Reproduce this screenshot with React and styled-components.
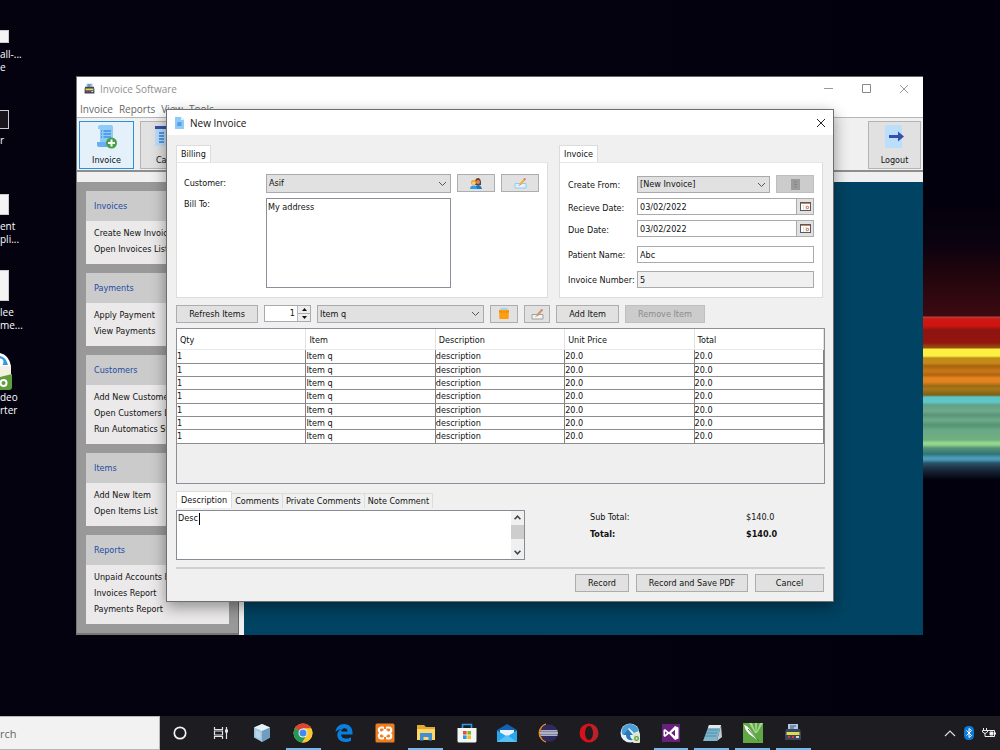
import React from "react";
import styled, { createGlobalStyle, css } from "styled-components";

const uiFont = `"DejaVu Sans Condensed", "DejaVu Sans", sans-serif`;
const systemFont = `"Open Sans", "Noto Sans", sans-serif`;

const GlobalStyle = createGlobalStyle`
  *, *::before, *::after {
    box-sizing: border-box;
  }

  body {
    margin: 0;
    background-color: #02000c;
    font-family: ${uiFont};
    font-size: 9px;
    line-height: 13px;
    color: #111;
  }

  button, input, select, textarea {
    margin: 0;
    padding: 0;
    font: inherit;
    color: inherit;
    border-radius: 0;
    outline: none;
  }

  svg {
    display: block;
  }
`;

/* ---------- desktop ---------- */

const Screen = styled.div`
  display: flex;
  flex-direction: column;
  min-height: 100vh;
`;

const Desktop = styled.main`
  position: relative;
  flex: 1;
  overflow: hidden;
  min-height: 650px;
  background:
    linear-gradient(
      to bottom,
      transparent 200px,
      #0c0210 245px,
      #22050c 275px,
      #3c0a12 316px,
      #b8423c 317px,
      #d21712 319px,
      #cc1511 326px,
      #8c1410 330px,
      #96140f 343px,
      #8a3a0c 345px,
      #a04c10 348px,
      #fcf040 349px,
      #fcf040 356px,
      #bd8c18 358px,
      #c88a18 363px,
      #a8620f 366px,
      #c87818 371px,
      #b0640f 375px,
      #e8841c 378px,
      #e08220 382px,
      #9a6a14 386px,
      #a87818 389px,
      #7c6018 395px,
      #5cc4c8 397px,
      #60c8c8 402px,
      #62a088 405px,
      #70aa8c 411px,
      #589478 415px,
      #6caa88 420px,
      #549474 425px,
      #68a884 430px,
      #72b080 440px,
      #94dc90 443px,
      #8cd088 445px,
      #569278 448px,
      #2f7474 454px,
      #4ca0bc 458px,
      #4896b4 460px,
      #2a5468 463px,
      #1c2c40 469px,
      #02000c 480px
    );
  background-repeat: no-repeat;

  &::before {
    content: "";
    position: absolute;
    inset: 0;
    background: linear-gradient(to right, #04020f 50%, transparent 92%);
  }
`;

const Shortcut = styled.div`
  position: absolute;
  left: 0;
  top: ${(props) => props.$top}px;
  font-family: ${systemFont};
  font-size: 10px;
  line-height: 13px;
  color: #fff;
  white-space: pre;
`;

const Thumbnail = styled.div`
  width: 9px;
  height: ${(props) => props.$height}px;
  margin-bottom: 5px;
  border: 1px solid #ccc;
  border-left: 0;
  background-color: ${(props) => (props.$dark ? "#1a141c" : "#f4f4f4")};
`;

/* ---------- windows ---------- */

const Window = styled.section`
  position: absolute;
  display: flex;
  flex-direction: column;
  background-color: #f0f0f0;
`;

const MainWindow = styled(Window)`
  top: 76px;
  left: 76px;
  right: 77px;
  border-top: 1px solid #666;
  border-left: 1px solid #777;
`;

const DialogWindow = styled(Window)`
  top: 109px;
  left: 166px;
  right: 166px;
  border: 1px solid #6e6e6e;
  box-shadow: 0 5px 14px rgba(0, 0, 0, 0.4);
`;

const TitleBar = styled.header`
  display: flex;
  align-items: center;
  height: ${(props) => (props.$dialog ? 25 : 23)}px;
  padding-left: 7px;
  background-color: #fff;
  color: ${(props) => (props.$dialog ? "#111" : "#8f8f8f")};
`;

const WindowTitle = styled.h1`
  flex: 1;
  margin: 0 0 0 5px;
  font-family: ${systemFont};
  font-size: 10px;
  font-weight: 400;
  line-height: 14px;
`;

const CaptionButton = styled.button`
  display: flex;
  align-items: center;
  justify-content: center;
  width: ${(props) => (props.$narrow ? 24 : 38)}px;
  height: 22px;
  border: 0;
  background: none;
`;

const MenuBar = styled.nav`
  display: flex;
  gap: 6px;
  height: 18px;
  padding: 2px 3px 0;
  background-color: #fff;
  border-bottom: 1px solid #b5b5b5;
`;

const MenuLink = styled.a`
  font-family: ${systemFont};
  font-size: 10px;
  line-height: 14px;
  color: #666;
  text-decoration: none;
`;

const ToolBar = styled.div`
  display: flex;
  gap: 6px;
  margin-bottom: 10px;
  padding: 3px 2px 1px;
  border-bottom: 2px solid #8e8e8e;
`;

const ToolButton = styled.button`
  display: flex;
  flex-direction: column;
  align-items: center;
  justify-content: space-between;
  width: ${(props) => (props.$last ? 53 : 55)}px;
  height: 48px;
  padding: 3px 0 1px;
  border: 1px solid #b4b4b4;
  background-color: #e1e1e1;
  margin-left: ${(props) => (props.$last ? "auto" : 0)};

  ${(props) =>
    props.$active &&
    css`
      border-color: #2a8fdc;
      background-color: #e4f1fb;
    `}
`;

const Workspace = styled.div`
  display: flex;
  background-color: #004362;
`;

const SideBar = styled.aside`
  display: flex;
  flex-direction: column;
  gap: 9px;
  width: 162px;
  padding: 9px;
  background-color: #999;
  border-right: 1px solid #666;
  border-bottom: 2px solid #777;
`;

const Splitter = styled.div`
  width: 5px;
  background-color: #f0f0f0;
`;

const Card = styled.section`
  background-color: #ebe9ea;
`;

const CardTitle = styled.h2`
  margin: 0;
  padding: 1px 8px;
  font-size: 9px;
  font-weight: 400;
  line-height: 28px;
  color: #1f4ba5;
  background-color: #cbcbcb;
`;

const CardList = styled.ul`
  margin: 0;
  padding: 4px 8px 7px;
  list-style: none;
`;

const CardLink = styled.a`
  display: block;
  line-height: 16px;
  white-space: nowrap;
  color: #111;
  text-decoration: none;
`;

/* ---------- dialog ---------- */

const DialogBody = styled.form`
  display: flex;
  flex-direction: column;
  padding: 10px 8px 9px 9px;
`;

const Panels = styled.div`
  display: grid;
  grid-template-columns: 372fr 264fr;
  gap: 11px;
  padding-right: 2px;
`;

const PanelColumn = styled.div`
  display: flex;
  flex-direction: column;
  align-items: stretch;
`;

const TabRow = styled.div`
  display: flex;
  align-items: flex-end;
`;

const Tab = styled.button`
  height: ${(props) => (props.$active ? 17 : 15)}px;
  padding: 0 4px;
  border: 1px solid #dcdcdc;
  border-bottom: 0;
  background-color: ${(props) => (props.$active ? "#fff" : "#f0f0f0")};

  & + & {
    border-left: 0;
    padding: 0 3px;
  }
`;

const Panel = styled.div`
  flex: 1;
  display: grid;
  border: 1px solid #dcdcdc;
  border-top-color: #e6e6e6;
  background-color: #fff;
`;

const BillingPanel = styled(Panel)`
  grid-template-columns: 76px 1fr 38px 38px;
  grid-template-rows: 19px 90px;
  gap: 5px 6px;
  padding: 11px 8px 9px 7px;
`;

const InvoicePanel = styled(Panel)`
  align-content: start;
  padding: 12px 8px 9px 8px;
`;

const FieldRow = styled.div`
  display: flex;
  align-items: flex-end;
  height: ${(props) => props.$height}px;
`;

const Label = styled.label`
  flex: none;
  width: 69px;
  line-height: ${(props) => (props.$low ? 13 : 16)}px;
  white-space: nowrap;
`;

const BillingLabel = styled.label`
  line-height: ${(props) => (props.$top ? 13 : 19)}px;
`;

const field = css`
  border: 1px solid #a9a9ae;
  background-color: #fff;
`;

const TextInput = styled.input`
  ${field}
  flex: 1;
  min-width: 0;
  width: 100%;
  height: 17px;
  padding: 0 2px;

  &:read-only {
    background-color: #f0f0f0;
  }
`;

const TextArea = styled.textarea`
  ${field}
  display: block;
  width: 100%;
  padding: 2px 1px;
  border-color: #8d8f98;
  resize: none;
  overflow: hidden;
`;

const SelectBox = styled.div`
  position: relative;
  flex: ${(props) => props.$flex || "1"};
  height: ${(props) => props.$height || 18}px;
  margin-right: ${(props) => props.$gap || 0}px;

  svg {
    position: absolute;
    right: 4px;
    top: 50%;
    margin-top: -3px;
    pointer-events: none;
  }
`;

const Select = styled.select`
  ${field}
  appearance: none;
  display: block;
  width: 100%;
  height: 100%;
  padding: 0 16px 0 2px;
  background-color: #e1e1e1;
`;

const Button = styled.button`
  display: flex;
  align-items: center;
  justify-content: center;
  flex: none;
  width: ${(props) => props.$width}px;
  height: 18px;
  border: 1px solid #adadad;
  background-color: #e1e1e1;
  white-space: nowrap;

  &:disabled {
    border-color: #bfbfbf;
    background-color: #ccc;
    color: #8b8b8b;
  }
`;

const DateButton = styled(Button)`
  height: 17px;
  border-left: 0;
`;

const ItemBar = styled.div`
  display: flex;
  gap: 6px;
  margin: 7px 0 5px;
`;

const Spinner = styled.div`
  ${field}
  display: flex;
  width: 47px;
  height: 17px;
`;

const SpinnerInput = styled.input`
  flex: 1;
  width: 0;
  padding-right: 2px;
  border: 0;
  text-align: right;
`;

const SpinnerArrows = styled.div`
  display: flex;
  flex-direction: column;
  width: 13px;
  border-left: 1px solid #bbb;
`;

const ArrowButton = styled.button`
  display: flex;
  align-items: center;
  justify-content: center;
  flex: 1;
  border: 0;
  background-color: #eee;

  & + & {
    border-top: 1px solid #aaa;
  }
`;

const TableFrame = styled.div`
  min-height: 156px;
  border: 1px solid #8d8f98;
  background-color: #efefef;
`;

const Table = styled.table`
  width: 100%;
  table-layout: fixed;
  border-collapse: separate;
  border-spacing: 0;
`;

const HeadCell = styled.th`
  height: 21px;
  padding: 2px 3px 0;
  border-right: 1px solid #e2e2e2;
  border-bottom: 1px solid #e9e9e9;
  background-color: #fff;
  font-weight: 400;
  text-align: left;
`;

const Cell = styled.td`
  height: 13px;
  padding: 0;
  border-right: 1px solid #828282;
  border-bottom: 1px solid #8c8c8c;
  background-color: #fff;
  line-height: 12px;
  vertical-align: top;
`;

const ItemRow = styled.tr`
  &:nth-child(3n + 1) ${Cell} {
    height: 14px;
  }
`;

const Summary = styled.div`
  display: flex;
  margin-top: 7px;
`;

const Notes = styled.div`
  flex: none;
  width: 349px;
`;

const NotesPanel = styled.div`
  position: relative;
  display: flex;
  height: 50px;
  margin-top: 2px;
  border: 1px solid #868b94;
  background-color: #fff;
`;

const NotesArea = styled(TextArea)`
  flex: 1;
  height: 48px;
  padding: 1px;
  border: 0;
`;

const Caret = styled.span`
  position: absolute;
  left: 22px;
  top: 2px;
  width: 1px;
  height: 12px;
  background-color: #000;
`;

const ScrollBar = styled.div`
  display: flex;
  flex-direction: column;
  align-items: center;
  justify-content: space-between;
  width: 13px;
  padding: 4px 0;
  background-color: #f0f0f0;
`;

const ScrollThumb = styled.div`
  width: 100%;
  height: 14px;
  margin-bottom: 6px;
  background-color: #cdcdcd;
`;

const Totals = styled.dl`
  display: grid;
  grid-template-columns: 156px auto;
  align-content: start;
  row-gap: 4px;
  margin: 20px 0 0 65px;
`;

const TotalLabel = styled.dt`
  font-weight: ${(props) => (props.$bold ? 700 : 400)};
`;

const TotalValue = styled.dd`
  margin: 0;
  font-weight: ${(props) => (props.$bold ? 700 : 400)};
`;

const Footer = styled.footer`
  display: flex;
  justify-content: flex-end;
  gap: 7px;
  margin-top: 7px;
  padding: 5px 1px 0 0;
  border-top: 2px solid #d0d0d0;
`;

/* ---------- taskbar ---------- */

const TaskBar = styled.footer`
  position: relative;
  display: flex;
  height: 34px;
  background-color: #1c1c21;
`;

const SearchInput = styled.input`
  width: 160px;
  height: 34px;
  border: 1px solid #b8b8b8;
  border-left: 0;
  background-color: #f2f2f2;
  font-family: ${systemFont};
  font-size: 11px;

  &::placeholder {
    color: #666;
    opacity: 1;
  }
`;

const TaskList = styled.div`
  display: grid;
  grid-template-columns: repeat(16, 1fr);
  flex: 0 1 654px;
`;

const TaskButton = styled.button`
  display: flex;
  align-items: center;
  justify-content: center;
  margin: 0 3px;
  border: 0;
  border-top: 2px solid transparent;
  border-bottom: 2px solid ${(props) => (props.$running ? "#76b9ed" : "transparent")};
  background: none;
`;

const Tray = styled.div`
  display: flex;
  align-items: center;
  gap: 8px;
  margin-left: auto;
  padding-right: 4px;
`;

/* ---------- icons ---------- */

const Chevron = () => (
  <svg width="9" height="6" viewBox="0 0 9 6" fill="none" stroke="#555">
    <path d="M1 1l3.5 3.5L8 1" />
  </svg>
);

const Cross = ({ color = "#222" }) => (
  <svg width="10" height="10" viewBox="0 0 10 10" fill="none" stroke={color}>
    <path d="M1 1l8 8M9 1L1 9" />
  </svg>
);

const Triangle = ({ down }) => (
  <svg width="5" height="3" viewBox="0 0 5 3" fill="#111">
    <path d={down ? "M0 0h5L2.5 3z" : "M0 3h5L2.5 0z"} />
  </svg>
);

const ScrollArrow = ({ down }) => (
  <svg width="7" height="5" viewBox="0 0 7 5" fill="none" stroke="#444" strokeWidth="1.6">
    <path d={down ? "M.6 .8l2.9 3 2.9-3" : "M.6 4.2l2.9-3 2.9 3"} />
  </svg>
);

const RegisterIcon = ({ size = 11 }) => (
  <svg width={size} height={size} viewBox="0 0 18 18">
    <path d="M4 1h10v7H4z" fill="#a9cbe6" />
    <path d="M6 3h6M6 5h4" stroke="#456" />
    <path d="M2 6h14l1 4v7H1v-7z" fill="#3a4560" />
    <path d="M2.500 9h13v3h-13z" fill="#e0d94a" />
    <path d="M4 14h2M8 14h2" stroke="#d43c3c" strokeWidth="2" />
    <path d="M12 14h3" stroke="#cdd6e0" strokeWidth="2" />
  </svg>
);

const DocIcon = () => (
  <svg width="11" height="12" viewBox="0 0 11 12">
    <path d="M1 0h6l3 3v9H1z" fill="#90caf9" />
    <path d="M7 0l3 3H7z" fill="#dff0ff" />
    <path d="M3.500 6h4M3 8h4.500" stroke="#1976d2" />
  </svg>
);

const InvoiceIcon = () => (
  <svg width="22" height="24" viewBox="0 0 22 24">
    <path d="M2 2q0-2 2-2h11q2 0 2 2v17H4V4H2z" fill="#90caf9" />
    <path d="M1 17h12v3q0 2-2 2H3q-2 0-2-2z" fill="#64b0f0" />
    <path d="M5 6h1M7.500 6H15M5 9h1M7.500 9H15M5 12h1M7.500 12H15" stroke="#1976d2" strokeWidth="1.200" />
    <circle cx="15.500" cy="18" r="5.500" fill="#43a047" />
    <path d="M15.500 14.500v7M12 18h7" stroke="#fff" strokeWidth="2" />
  </svg>
);

const CardsIcon = () => (
  <svg width="26" height="22" viewBox="0 0 26 22">
    <path d="M0 1h26v20H0z" fill="#bbdefb" />
    <path d="M0 1h26v3H0z" fill="#3550a8" />
    <path d="M4 8h5M4 11h5M4 14h5M4 17h5M11 8h5M11 11h5M11 14h5M11 17h5" stroke="#2f86dc" strokeWidth="1.600" />
  </svg>
);

const LogoutIcon = () => (
  <svg width="20" height="24" viewBox="0 0 20 24">
    <rect x="0" y="0" width="17" height="23" rx="1.500" fill="#bbdefb" />
    <path d="M4 10h9V6.500l6 5-6 5V13H4z" fill="#3550a8" />
  </svg>
);

const PeopleIcon = () => (
  <svg width="12" height="11" viewBox="0 0 12 11">
    <path d="M5 3.500Q5.500 0 8 0t3 4v3H5z" fill="#6d4030" />
    <circle cx="8" cy="4" r="2" fill="#d98850" />
    <path d="M5 11q0-4 3-4t4 4z" fill="#1976d2" />
    <circle cx="3.500" cy="4.500" r="2.500" fill="#f6a623" />
    <circle cx="3.700" cy="5.200" r="1.600" fill="#ffcc80" />
    <path d="M0 11q0-3.500 3.500-3.500T7 11z" fill="#29a3e8" />
  </svg>
);

const EditIcon = ({ muted }) => (
  <svg width="13" height="11" viewBox="0 0 13 11" fill="none">
    <path d="M1 5.500h11v4.500H1z" fill={muted ? "#f4f4f4" : "#e3f3fd"} stroke={muted ? "#a0a0a0" : "#8ccdf2"} />
    <path d="M6 6.500L10 2" stroke={muted ? "#d09a60" : "#fbb03b"} strokeWidth="2" />
    <path d="M10 2l1.400-1.500" stroke="#e57373" strokeWidth="2" />
    <path d="M5 7.500l1-1" stroke="#555" />
  </svg>
);

const BoxIcon = () => (
  <svg width="12" height="12" viewBox="0 0 12 12">
    <path d="M2.500 0h7v3h-7z" fill="#9fd4ee" />
    <path d="M1 2h10l-.5 9h-9z" fill="#ff9d0a" />
    <path d="M1 2l2 1.500h6L11 2v2.500H1z" fill="#e68a20" />
  </svg>
);

const FormIcon = () => (
  <svg width="9" height="11" viewBox="0 0 9 11">
    <path d="M0 0h9v11H0z" fill="#9b9b9b" />
    <path d="M3 3h3M3 5.500h3M3 8h3" stroke="#858585" />
  </svg>
);

const CalendarIcon = () => (
  <svg width="11" height="9" viewBox="0 0 11 9">
    <rect x=".5" y=".5" width="10" height="8" fill="#fff" stroke="#555a66" />
    <path d="M1 1.500h9" stroke="#c98650" />
    <path d="M3.500 3v5M6 3v5" stroke="#ddd" />
    <circle cx="7.500" cy="5.500" r="1.200" fill="none" stroke="#d4582a" />
  </svg>
);

const ConverterIcon = () => (
  <svg width="12" height="38" viewBox="0 0 12 38">
    <path d="M0 0Q9 2 11 13H0z" fill="#fff" />
    <path d="M0 3Q6 4 8 12H0z" fill="#2f9ade" />
    <circle cx="0" cy="9" r="3.500" fill="#fff" />
    <path d="M0 13h11v12H0z" fill="#f3f1e2" />
    <path d="M0 24l12-3v13q0 3-3 3H0z" fill="#5f9e3c" />
    <circle cx="3.500" cy="30" r="3" fill="none" stroke="#fff" strokeWidth="2" />
  </svg>
);

const TaskIcon = ({ children }) => (
  <svg width="20" height="20" viewBox="0 0 20 20" fill="none">
    {children}
  </svg>
);

const taskItems = [
  { name: "Cortana", icon: <circle cx="10" cy="10" r="5.700" stroke="#f2f2f2" strokeWidth="1.700" /> },
  {
    name: "Task View",
    icon: (
      <g stroke="#e4e4e4" strokeWidth="1.200">
        <path d="M3.500 4v2.500h8V4M3.500 16v-2.500h8V16M3.500 8h8v4h-8zM15.500 4v12" />
        <path d="M15.500 6.500v3" strokeWidth="3" />
      </g>
    ),
  },
  {
    name: "NetBeans",
    icon: (
      <>
        <path d="M10 1l8 3.500v10L10 19l-8-4.500v-10z" fill="#9ec3dd" />
        <path d="M10 1l8 3.500L10 8 2 4.500z" fill="#e6f1f8" />
        <path d="M10 8l8-3.500v10L10 19z" fill="#6f9cc0" />
        <path d="M3.500 7l5 2.300v7l-5-2.500z" fill="#b8d6e8" />
      </>
    ),
  },
  {
    name: "Chrome",
    running: true,
    icon: (
      <>
        <circle cx="10" cy="10" r="9.500" fill="#fbc92f" />
        <path d="M10 10L1.800 5.200A9.500 9.500 0 0 1 18.300 5.500H10z" fill="#dc4437" />
        <path d="M1.800 5.200A9.500 9.500 0 0 0 9.500 19.500l4.300-7.300L10 10z" fill="#219a55" />
        <path d="M9 19.450A9.500 9.500 0 0 0 18.300 5.500H10l3.800 6.800z" fill="#fbc92f" />
        <circle cx="10" cy="10" r="4.500" fill="#f4f4f4" />
        <circle cx="10" cy="10" r="3.500" fill="#4688f1" />
      </>
    ),
  },
  {
    name: "Edge",
    icon: (
      <path
        d="M1.500 9C2 4 5.500 1 10 1c5 0 8.500 3.500 8.500 8.500v2H7c.2 3 2.500 4 5 4 2 0 3.800-.6 5-1.300v3.500c-1.500.9-3.500 1.300-5.700 1.300C6.500 19 3.300 16 3.300 12c0-2.700 1.500-4.700 3.800-5.800C4.500 6.500 2.700 7.500 1.500 9zM7.200 8.500h6.300C13.500 6.500 12.500 5.300 10.500 5.300S7.400 6.700 7.200 8.500z"
        fill="#0a7fde"
      />
    ),
  },
  {
    name: "XAMPP",
    icon: (
      <>
        <rect x=".5" y=".5" width="19" height="19" rx="1.500" fill="#ef7d1f" />
        <g stroke="#fff" strokeWidth="2.200">
          <rect x="3.800" y="4.500" width="6" height="5" rx="2.400" />
          <rect x="10.200" y="4.500" width="6" height="5" rx="2.400" />
          <rect x="3.800" y="10.500" width="6" height="5" rx="2.400" />
          <rect x="10.200" y="10.500" width="6" height="5" rx="2.400" />
        </g>
        <path d="M7.500 7.500h5v5h-5z" fill="#fff" />
        <path d="M9 3h2v3H9zM9 14h2v3H9z" fill="#ef7d1f" />
      </>
    ),
  },
  {
    name: "File Explorer",
    running: true,
    icon: (
      <>
        <path d="M1 2h7l2 2h9v13H1z" fill="#e5a82e" />
        <path d="M1 6h18v11H1z" fill="#ffd766" />
        <path d="M4 10h12v7.500h-3.500V14h-5v3.500H4z" fill="#3f8fd8" />
      </>
    ),
  },
  {
    name: "Store",
    icon: (
      <>
        <path d="M5.500 6V1.500h9V6" stroke="#2b9be4" strokeWidth="1.600" />
        <path d="M.5 5h19v13q0 1.500-1.500 1.500H2Q.5 19.500.5 18z" fill="#f5f5f5" />
        <path d="M6 8h3.600v3.600H6z" fill="#e8502c" />
        <path d="M10.400 8H14v3.600h-3.600z" fill="#7dba20" />
        <path d="M6 12.400h3.600V16H6z" fill="#1f9fe8" />
        <path d="M10.400 12.400H14V16h-3.600z" fill="#fbb916" />
      </>
    ),
  },
  {
    name: "Mail",
    icon: (
      <>
        <path d="M0 7l10-6 10 6v4H0z" fill="#0f62b4" />
        <path d="M3 7h14v6H3z" fill="#e8f3fb" />
        <path d="M0 7.500l10 6 10-6V19H0z" fill="#2aa7ea" />
        <path d="M0 19l10-7 10 7z" fill="#57c2f5" />
      </>
    ),
  },
  {
    name: "Eclipse",
    icon: (
      <>
        <path d="M8 1A9.300 9.300 0 0 0 8 19 10 10 0 0 1 8 1z" fill="#f09020" stroke="#f09020" />
        <circle cx="11" cy="10" r="8.800" fill="#2f2a5e" />
        <path d="M2.500 7.800h17M2 10h18M2.500 12.200h17" stroke="#d8dce8" strokeWidth="1.300" />
      </>
    ),
  },
  {
    name: "Opera",
    icon: (
      <>
        <circle cx="10" cy="10" r="9.500" fill="#d8121b" />
        <path d="M13 1.500q6 3 6 8.500t-6 8.500z" fill="#b5242a" />
        <ellipse cx="10" cy="10" rx="4" ry="7" fill="#1c1c21" />
      </>
    ),
  },
  {
    name: "Backup",
    icon: (
      <>
        <circle cx="10" cy="10" r="9.500" fill="#e7f1f8" />
        <path d="M2 6q3-5.500 9-5 6 1 8 7l-5 2-5-5-6 7q-2-2-1-6z" fill="#4b9fd8" />
        <path d="M3 12l5-6 5 6h-3q0 3 3 5-7 1-7-5z" fill="#2b78b8" />
        <rect x="13" y="10" width="7" height="10" rx="1" fill="#dbe8cf" />
        <circle cx="16.500" cy="15.500" r="1.800" stroke="#5f9e3c" strokeWidth="1.300" />
      </>
    ),
  },
  {
    name: "Visual Studio",
    running: true,
    icon: (
      <>
        <path d="M1 1h18v18H1z" fill="#68217a" />
        <path d="M2.500 7l1.500-1 4 3.200L14 3l3.500 1.500v11L14 17l-6-6.200L4 14l-1.500-1zM4 8.200v3.600L6 10zM14 6.800L10.200 10l3.800 3.200z" fill="#fff" fillRule="evenodd" />
      </>
    ),
  },
  {
    name: "Notepad",
    running: true,
    icon: (
      <>
        <path d="M7 2h12l-4 16H1z" fill="#7fb6cc" />
        <path d="M7 2h12l-1 3H6z" fill="#e2e8ea" />
        <path d="M5.500 7h11M4.500 10h11M3.500 13h11" stroke="#4f8ba8" />
        <path d="M19 2l1 12-5 4z" fill="#c3ccd0" />
      </>
    ),
  },
  {
    name: "CorelDRAW",
    running: true,
    icon: (
      <>
        <path d="M0 0h20v20H0z" fill="#5fa843" />
        <path d="M12 10L6 0h3l3.500 9L12 0h2l-.5 9L17 0h3l-6 10z" fill="#a9d694" />
        <path d="M1 2q3 0 7 6l8 10-10-7Q2 7 1 2z" fill="#fff" />
        <path d="M5 6l11 12" stroke="#3a7a28" />
      </>
    ),
  },
  { name: "Invoice Software", running: true, icon: <RegisterIcon size={18} /> },
];

/* ---------- content ---------- */

const menus = ["Invoice", "Reports", "View", "Tools"];

const sections = [
  { title: "Invoices", links: ["Create New Invoice", "Open Invoices List"] },
  { title: "Payments", links: ["Apply Payment", "View Payments"] },
  { title: "Customers", links: ["Add New Customer", "Open Customers List", "Run Automatics St"] },
  { title: "Items", links: ["Add New Item", "Open Items List"] },
  { title: "Reports", links: ["Unpaid Accounts Report", "Invoices Report", "Payments Report"] },
];

const columns = ["Qty", "Item", "Description", "Unit Price", "Total"];
const items = Array.from({ length: 7 }, () => ["1", "Item q", "description", "20.0", "20.0"]);

const Shortcuts = () => (
  <>
    <Shortcut $top={30}>
      <Thumbnail $height={13} />
      {"all-...\ne"}
    </Shortcut>
    <Shortcut $top={110}>
      <Thumbnail $height={19} $dark />
      {"r"}
    </Shortcut>
    <Shortcut $top={194}>
      <Thumbnail $height={21} />
      {"ent\npli..."}
    </Shortcut>
    <Shortcut $top={270}>
      <Thumbnail $height={31} />
      {"lee\nme..."}
    </Shortcut>
    <Shortcut $top={353}>
      <ConverterIcon />
      {"deo\nrter"}
    </Shortcut>
  </>
);

const SoftwareWindow = () => (
  <MainWindow>
    <TitleBar>
      <RegisterIcon />
      <WindowTitle>Invoice Software</WindowTitle>
      <CaptionButton aria-label="Minimize">
        <svg width="9" height="9" viewBox="0 0 9 9" stroke="#999">
          <path d="M0 4.500h9" />
        </svg>
      </CaptionButton>
      <CaptionButton aria-label="Maximize">
        <svg width="9" height="9" viewBox="0 0 9 9" fill="none" stroke="#888">
          <path d="M.5.5h8v8h-8z" />
        </svg>
      </CaptionButton>
      <CaptionButton aria-label="Close">
        <Cross color="#999" />
      </CaptionButton>
    </TitleBar>
    <MenuBar>
      {menus.map((menu) => (
        <MenuLink key={menu} href="#menu">
          {menu}
        </MenuLink>
      ))}
    </MenuBar>
    <ToolBar>
      <ToolButton $active>
        <InvoiceIcon />
        Invoice
      </ToolButton>
      <ToolButton>
        <CardsIcon />
        Cards
      </ToolButton>
      <ToolButton $last>
        <LogoutIcon />
        Logout
      </ToolButton>
    </ToolBar>
    <Workspace>
      <SideBar>
        {sections.map(({ title, links }) => (
          <Card key={title}>
            <CardTitle>{title}</CardTitle>
            <CardList>
              {links.map((link) => (
                <li key={link}>
                  <CardLink href="#open">{link}</CardLink>
                </li>
              ))}
            </CardList>
          </Card>
        ))}
      </SideBar>
      <Splitter />
    </Workspace>
  </MainWindow>
);

const Billing = () => (
  <PanelColumn>
    <TabRow>
      <Tab type="button" $active>
        Billing
      </Tab>
    </TabRow>
    <BillingPanel>
      <BillingLabel htmlFor="customer">Customer:</BillingLabel>
      <SelectBox $height={19}>
        <Select id="customer">
          <option>Asif</option>
        </Select>
        <Chevron />
      </SelectBox>
      <Button type="button" aria-label="Customers">
        <PeopleIcon />
      </Button>
      <Button type="button" aria-label="Edit customer">
        <EditIcon />
      </Button>
      <BillingLabel htmlFor="billTo" $top>
        Bill To:
      </BillingLabel>
      <TextArea id="billTo" defaultValue="My address" />
    </BillingPanel>
  </PanelColumn>
);

const InvoiceDetails = () => (
  <PanelColumn>
    <TabRow>
      <Tab type="button" $active>
        Invoice
      </Tab>
    </TabRow>
    <InvoicePanel>
      <FieldRow $height={18}>
        <Label htmlFor="createFrom">Create From:</Label>
        <SelectBox $height={17} $gap={6}>
          <Select id="createFrom">
            <option>[New Invoice]</option>
          </Select>
          <Chevron />
        </SelectBox>
        <Button type="button" $width={38} disabled aria-label="Load invoice">
          <FormIcon />
        </Button>
      </FieldRow>
      <FieldRow $height={22}>
        <Label htmlFor="recieveDate" $low>
          Recieve Date:
        </Label>
        <TextInput id="recieveDate" defaultValue="03/02/2022" />
        <DateButton type="button" $width={17} aria-label="Pick recieve date">
          <CalendarIcon />
        </DateButton>
      </FieldRow>
      <FieldRow $height={22}>
        <Label htmlFor="dueDate" $low>
          Due Date:
        </Label>
        <TextInput id="dueDate" defaultValue="03/02/2022" />
        <DateButton type="button" $width={17} aria-label="Pick due date">
          <CalendarIcon />
        </DateButton>
      </FieldRow>
      <FieldRow $height={26}>
        <Label htmlFor="patient">Patient Name:</Label>
        <TextInput id="patient" defaultValue="Abc" />
      </FieldRow>
      <FieldRow $height={25}>
        <Label htmlFor="number">Invoice Number:</Label>
        <TextInput id="number" defaultValue="5" readOnly />
      </FieldRow>
    </InvoicePanel>
  </PanelColumn>
);

const ItemControls = () => (
  <ItemBar>
    <Button type="button" $width={82}>
      Refresh Items
    </Button>
    <Spinner>
      <SpinnerInput aria-label="Quantity" defaultValue="1" />
      <SpinnerArrows>
        <ArrowButton type="button" aria-label="Increase">
          <Triangle />
        </ArrowButton>
        <ArrowButton type="button" aria-label="Decrease">
          <Triangle down />
        </ArrowButton>
      </SpinnerArrows>
    </Spinner>
    <SelectBox $flex="0 1 167px">
      <Select aria-label="Item">
        <option>Item q</option>
      </Select>
      <Chevron />
    </SelectBox>
    <Button type="button" $width={28} aria-label="Items">
      <BoxIcon />
    </Button>
    <Button type="button" $width={26} aria-label="Edit item">
      <EditIcon muted />
    </Button>
    <Button type="button" $width={63}>
      Add Item
    </Button>
    <Button type="button" $width={80} disabled>
      Remove Item
    </Button>
  </ItemBar>
);

const NewInvoiceDialog = () => (
  <DialogWindow role="dialog" aria-label="New Invoice">
    <TitleBar $dialog>
      <DocIcon />
      <WindowTitle>New Invoice</WindowTitle>
      <CaptionButton $narrow aria-label="Close">
        <Cross />
      </CaptionButton>
    </TitleBar>
    <DialogBody onSubmit={(event) => event.preventDefault()}>
      <Panels>
        <Billing />
        <InvoiceDetails />
      </Panels>
      <ItemControls />
      <TableFrame>
        <Table>
          <thead>
            <tr>
              {columns.map((column) => (
                <HeadCell key={column}>{column}</HeadCell>
              ))}
            </tr>
          </thead>
          <tbody>
            {items.map((item, row) => (
              <ItemRow key={row}>
                {item.map((value, index) => (
                  <Cell key={index}>{value}</Cell>
                ))}
              </ItemRow>
            ))}
          </tbody>
        </Table>
      </TableFrame>
      <Summary>
        <Notes>
          <TabRow>
            <Tab type="button" $active>
              Description
            </Tab>
            <Tab type="button">Comments</Tab>
            <Tab type="button">Private Comments</Tab>
            <Tab type="button">Note Comment</Tab>
          </TabRow>
          <NotesPanel>
            <NotesArea aria-label="Description" defaultValue="Desc" />
            <Caret />
            <ScrollBar>
              <ScrollArrow />
              <ScrollThumb />
              <ScrollArrow down />
            </ScrollBar>
          </NotesPanel>
        </Notes>
        <Totals>
          <TotalLabel>Sub Total:</TotalLabel>
          <TotalValue>$140.0</TotalValue>
          <TotalLabel $bold>Total:</TotalLabel>
          <TotalValue $bold>$140.0</TotalValue>
        </Totals>
      </Summary>
      <Footer>
        <Button $width={54}>Record</Button>
        <Button $width={112}>Record and Save PDF</Button>
        <Button type="button" $width={69}>
          Cancel
        </Button>
      </Footer>
    </DialogBody>
  </DialogWindow>
);

const WindowsTaskBar = () => (
  <TaskBar>
    <SearchInput aria-label="Search" placeholder="rch" />
    <TaskList>
      {taskItems.map(({ name, icon, running }) => (
        <TaskButton key={name} $running={running} aria-label={name}>
          <TaskIcon>{icon}</TaskIcon>
        </TaskButton>
      ))}
    </TaskList>
    <Tray>
      <svg width="12" height="7" viewBox="0 0 12 7" fill="none" stroke="#ddd" strokeWidth="1.200">
        <path d="M1 6l5-5 5 5" />
      </svg>
      <svg width="10" height="14" viewBox="0 0 10 14" fill="none">
        <rect width="10" height="14" rx="4.500" fill="#0a7bdc" />
        <path d="M2.500 4.500l5 5L5 11.500v-9l2.500 2-5 5" stroke="#fff" />
      </svg>
      <svg width="14" height="10" viewBox="0 0 14 10" fill="none" stroke="#eee">
        <path d="M5 2.500h7.500v6h-7.500M13.500 4.500v2" />
        <path d="M8 4h3v3H8z" fill="#eee" />
        <path d="M1.500 0v2M4.500 0v2M.5 2.500h5v1.500L3 5.500.5 4zM3 5v3.500h2" />
      </svg>
    </Tray>
  </TaskBar>
);

const App = () => (
  <>
    <GlobalStyle />
    <Screen>
      <Desktop>
        <Shortcuts />
        <SoftwareWindow />
        <NewInvoiceDialog />
      </Desktop>
      <WindowsTaskBar />
    </Screen>
  </>
);

export default App;
